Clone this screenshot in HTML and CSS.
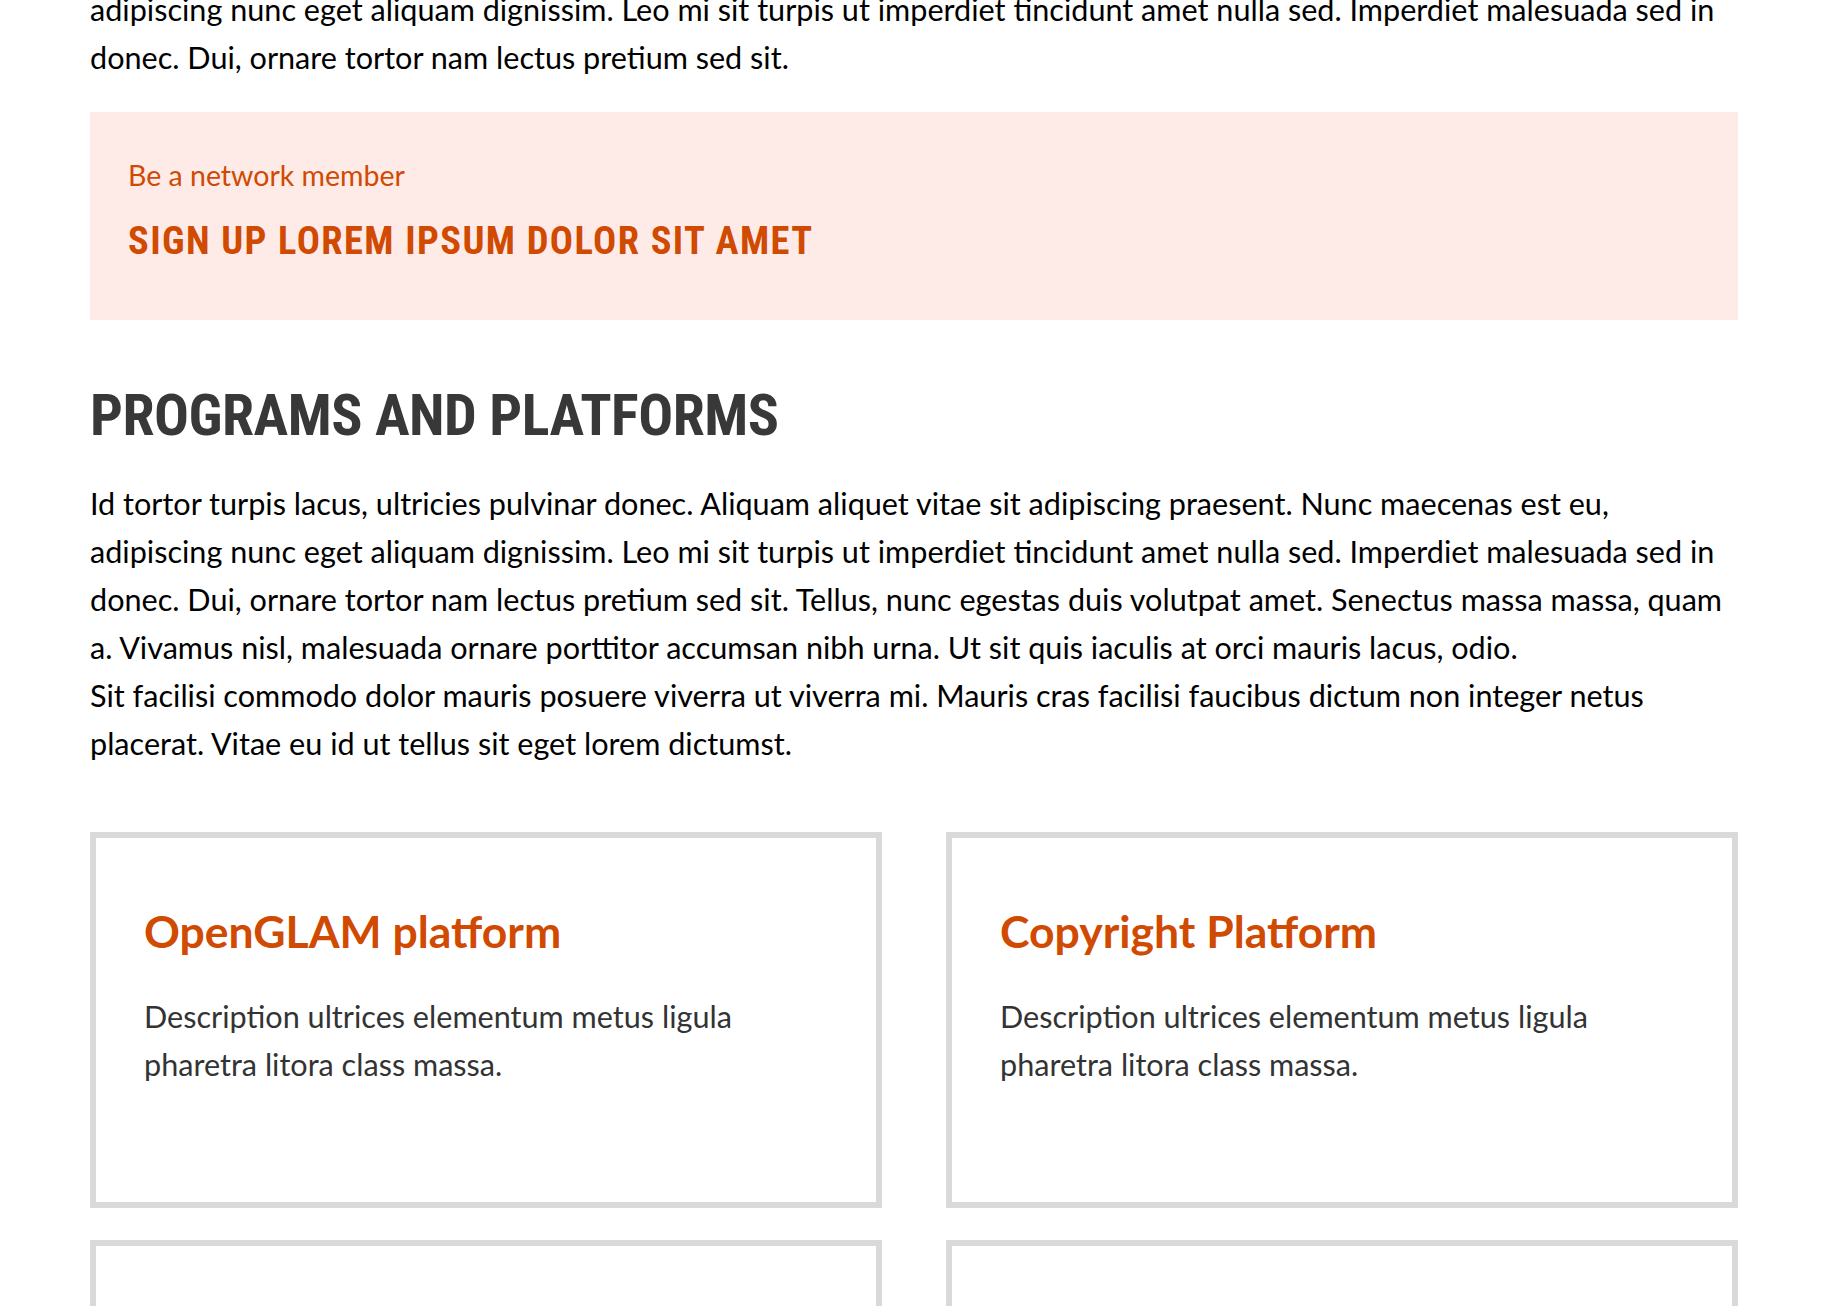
FILE: index.html
```html
<!DOCTYPE html>
<html lang="en">
<head>
<meta charset="utf-8">
<title>Programs and platforms</title>
<link rel="stylesheet" href="styles.css">
</head>
<body>
<main class="page">
  <p class="text intro">Id tortor turpis lacus, ultricies pulvinar donec. Aliquam aliquet vitae sit adipiscing praesent. Nunc maecenas est eu, adipiscing nunc eget aliquam dignissim. Leo mi sit turpis ut imperdiet tincidunt amet nulla sed. Imperdiet malesuada sed in donec. Dui, ornare tortor nam lectus pretium sed sit.</p>

  <section class="cta">
    <p class="cta-label">Be a network member</p>
    <h2 class="cta-title">SIGN UP LOREM IPSUM DOLOR SIT AMET</h2>
  </section>

  <section class="programs">
    <h2 class="section-title">PROGRAMS AND PLATFORMS</h2>
    <p class="text">Id tortor turpis lacus, ultricies pulvinar donec. Aliquam aliquet vitae sit adipiscing praesent. Nunc maecenas est eu, adipiscing nunc eget aliquam dignissim. Leo mi sit turpis ut imperdiet tincidunt amet nulla sed. Imperdiet malesuada sed in donec. Dui, ornare tortor nam lectus pretium sed sit. Tellus, nunc egestas duis volutpat amet. Senectus massa massa, quam a. Vivamus nisl, malesuada ornare porttitor accumsan nibh urna. Ut sit quis iaculis at orci mauris lacus, odio.<br>Sit facilisi commodo dolor mauris posuere viverra ut viverra mi. Mauris cras facilisi faucibus dictum non integer netus placerat. Vitae eu id ut tellus sit eget lorem dictumst.</p>

    <div class="cards">
      <a class="card" href="#">
        <h3 class="card-title">OpenGLAM platform</h3>
        <p class="card-text">Description ultrices elementum metus ligula pharetra litora class massa.</p>
      </a>
      <a class="card" href="#">
        <h3 class="card-title">Copyright Platform</h3>
        <p class="card-text">Description ultrices elementum metus ligula pharetra litora class massa.</p>
      </a>
      <a class="card" href="#">
        <h3 class="card-title">Open Science platform</h3>
        <p class="card-text">Description ultrices elementum metus ligula pharetra litora class massa.</p>
      </a>
      <a class="card" href="#">
        <h3 class="card-title">Open Education platform</h3>
        <p class="card-text">Description ultrices elementum metus ligula pharetra litora class massa.</p>
      </a>
    </div>
  </section>
</main>
</body>
</html>
```

FILE: styles.css
```css
html, body {
  margin: 0;
  background: #ffffff;
}

body {
  font-family: Lato, "Noto Sans", sans-serif;
  color: #000000;
}

.page {
  width: 1648px;
  padding-left: 90px;
}

.text {
  font-size: 30.6px;
  line-height: 48px;
  margin: 0;
}

/* the page is scrolled a little: the intro paragraph starts above the fold */
.intro {
  margin-top: -62px;
  margin-bottom: 30px;
}

.cta {
  background: #feebe8;
  padding: 40px 38px 56px;
}

.cta-label {
  margin: 0;
  font-size: 28.5px;
  line-height: 46px;
  color: #d04a02;
}

.cta-title {
  margin: 20px 0 0;
  font-family: "Roboto Condensed", "Liberation Sans Narrow", "DejaVu Sans Condensed", sans-serif;
  font-stretch: condensed;
  font-weight: 700;
  font-size: 38.5px;
  line-height: 1.2;
  letter-spacing: 1.4px;
  color: #d04a02;
}

.section-title {
  margin: 61px 0 29px;
  font-family: "Roboto Condensed", "Liberation Sans Narrow", "DejaVu Sans Condensed", sans-serif;
  font-stretch: condensed;
  font-weight: 700;
  font-size: 58px;
  line-height: 1.2;
  letter-spacing: -0.5px;
  color: #383838;
}

.cards {
  display: grid;
  grid-template-columns: 1fr 1fr;
  column-gap: 64px;
  row-gap: 32px;
  margin-top: 64px;
}

.card {
  display: block;
  border: 6px solid #d9d9d9;
  padding: 66px 48px 113px;
  text-decoration: none;
}

.card-title {
  margin: 0 0 36px;
  font-size: 44.5px;
  line-height: 1.2;
  font-weight: 700;
  color: #d04a02;
}

.card-text {
  margin: 0;
  font-size: 30.6px;
  line-height: 48px;
  color: #333333;
}
```
